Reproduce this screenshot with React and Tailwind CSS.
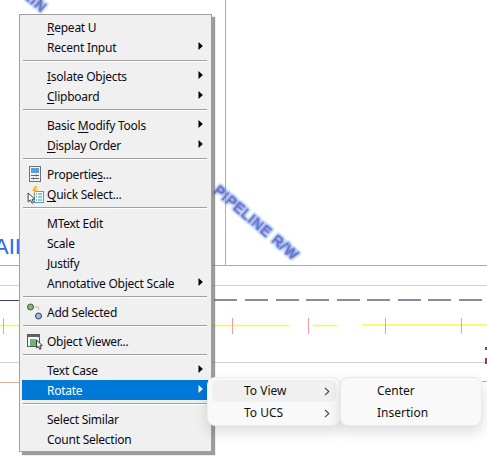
const font = { fontFamily: '"Noto Sans", "Open Sans", sans-serif' };

function Tri({ white }) {
  return (
    <svg width="5" height="8" viewBox="0 0 5 8" className="absolute left-[176px] top-[5px]">
      <path d="M0.5 0L4.8 4L0.5 8Z" fill={white ? '#ffffff' : '#000000'} />
    </svg>
  );
}

function Row({ children, arrow, active, icon }) {
  return (
    <div className={`relative h-5 pl-[25px] flex items-center text-[12px] leading-none tracking-[-0.25px] pt-[2px] ${active ? 'bg-[#0078d7] text-white' : 'text-[#0a0a14]'}`}>
      {icon && <span className="absolute left-[3px] top-0 w-[20px] h-5 flex items-center justify-center">{icon}</span>}
      <span className="whitespace-nowrap">{children}</span>
      {arrow && <Tri white={active} />}
    </div>
  );
}

const Sep = () => (
  <div className="h-[9px] pt-[3px] px-[1px]">
    <div className="h-[1px] bg-[#a0a0a0]" />
    <div className="h-[1px] bg-white" />
  </div>
);

const U = ({ children }) => <span className="underline underline-offset-2">{children}</span>;

const PropsIcon = (
  <svg width="14" height="18" viewBox="0 0 14 18">
    <rect x="1.5" y="1.5" width="11" height="15" fill="#f4f4f4" stroke="#6b7378" />
    <rect x="3" y="3" width="8" height="5" fill="#5a9fdc" />
    <path d="M3 10.5h8M3 13.5h8" stroke="#5d6468" />
    <path d="M8.5 9.5v2M5.5 12.5v2" stroke="#5d6468" />
  </svg>
);

const QuickIcon = (
  <svg width="17" height="19" viewBox="0 0 17 19">
    <rect x="7.5" y="6.5" width="9" height="11" fill="#f5fafd" stroke="#5b9bd0" />
    <path d="M9 9h1M11 9h4M9 12h1M11 12h4M9 15h1M11 15h4" stroke="#3f87c4" />
    <path d="M8 1L5 6h2.5L6 10l5-5.5H8.5L10.5 1Z" fill="#f8b62c" />
    <path d="M1 8l0.2 9 2.2-2 1.6 3.2 1.6-0.8-1.6-3 2.8-0.4Z" fill="#fff" stroke="#3c3c3c" />
  </svg>
);

const AddIcon = (
  <svg width="18" height="18" viewBox="0 0 18 18">
    <circle cx="4.5" cy="4" r="3" fill="#8db17a" stroke="#42573a" />
    <path d="M9 4h3.5v3M10 9" stroke="#c2c2c2" fill="none" />
    <circle cx="12.5" cy="13" r="3" fill="#9db7dd" stroke="#33435d" />
  </svg>
);

const ViewerIcon = (
  <svg width="17" height="17" viewBox="0 0 17 17">
    <rect x="0.5" y="1.5" width="12" height="12" fill="#f4f4f4" stroke="#5a5a5a" />
    <rect x="1" y="2" width="11" height="2" fill="#5f6265" />
    <path d="M3 6h6v7H3Z" fill="#67b874" />
    <path d="M9.5 7l0.2 8 1.8-1.7 1.3 3 1.4-0.7-1.3-2.7 2.4-0.3Z" fill="#fff" stroke="#2e2e2e" />
  </svg>
);

function Chevron() {
  return (
    <svg width="6" height="9" viewBox="0 0 6 9" className="absolute left-[112px] top-[7px]">
      <path d="M1 0.8L4.8 4.5L1 8.2" fill="none" stroke="#404040" strokeWidth="1.1" />
    </svg>
  );
}

function Canvas() {
  const dashes = [214, 245, 276, 306, 337, 367, 398, 428, 459];
  const ticks = [3, 232, 308, 385, 461];
  return (
    <svg width="487" height="463" className="absolute inset-0">
      <defs>
        <filter id="glow" x="-20%" y="-60%" width="140%" height="220%">
          <feMorphology operator="dilate" radius="0.6" />
          <feGaussianBlur stdDeviation="1" />
        </filter>
      </defs>
      <path d="M225.5 0V266" stroke="#dc9c90" />
      <path d="M0 265.5H487" stroke="#d8988c" strokeWidth="1.2" />
      <path d="M0 285.5H487" stroke="#cfcfcf" />
      <path d="M0 300.5H19" stroke="#3a4060" />
      {dashes.map((x) => (
        <path key={x} d={`M${x} 300H${x + 23}`} stroke="#3a4060" strokeWidth="1.2" />
      ))}
      <path d="M0 325.5H20M212 325.5H289M313 325.5H337M362 325H487" stroke="#fbf748" strokeWidth="1.5" />
      {ticks.map((x) => (
        <path key={x} d={`M${x}.5 318V334`} stroke="#f79aa0" />
      ))}
      <path d="M0 362.5H487" stroke="#cfcfcf" />
      <path d="M0 382.5H20" stroke="#d8b0a0" />
      <path d="M482 381.5H487" stroke="#e0a090" />
      <path d="M486 347V350M486 358V364" stroke="#c8283c" strokeWidth="2" />

      <g transform="translate(213 192) rotate(40.5)" fontFamily="Liberation Sans, sans-serif" fontSize="14" letterSpacing="1">
        <text filter="url(#glow)" fill="#5c90f4">PIPELINE R/W</text>
        <text fill="#8a5a90" opacity="0.85">PIPELINE R/W</text>
      </g>
      <g transform="translate(23 -3) rotate(40.5)" fontFamily="Liberation Sans, sans-serif" fontSize="14" letterSpacing="1">
        <text filter="url(#glow)" fill="#5c90f4">LIN</text>
        <text fill="#8a5a90" opacity="0.85">LIN</text>
      </g>
      <text x="-6" y="254" fill="#2a68f2" fontFamily="Liberation Sans, sans-serif" fontSize="22">AII</text>
    </svg>
  );
}

export default function App() {
  return (
    <div className="relative w-[487px] h-[463px] bg-white overflow-hidden" style={font}>
      <Canvas />

      <div className="absolute left-[19px] top-[14px] w-[193px] border border-[#a0a0a0] bg-[#f0f0f0] py-[2px] pl-[2px] pr-[3px] shadow-[3px_3px_1px_rgba(90,90,90,0.6)]">
        <Row><U>R</U>epeat U</Row>
        <Row arrow>Recent Input</Row>
        <Sep />
        <Row arrow><U>I</U>solate Objects</Row>
        <Row arrow><U>C</U>lipboard</Row>
        <Sep />
        <Row arrow>Basic <U>M</U>odify Tools</Row>
        <Row arrow><U>D</U>isplay Order</Row>
        <Sep />
        <Row icon={PropsIcon}>Propertie<U>s</U>...</Row>
        <Row icon={QuickIcon}><U>Q</U>uick Select...</Row>
        <Sep />
        <Row>MText Edit</Row>
        <Row>Scale</Row>
        <Row>Justify</Row>
        <Row arrow>Annotative Object Scale</Row>
        <Sep />
        <Row icon={AddIcon}>Add Selected</Row>
        <Sep />
        <Row icon={ViewerIcon}>Object Viewer...</Row>
        <Sep />
        <Row arrow>Text Case</Row>
        <Row arrow active>Rotate</Row>
        <Sep />
        <Row>Select Similar</Row>
        <Row>Count Selection</Row>
      </div>

      <div className="absolute left-[207px] top-[377px] w-[134px] h-[49px] rounded-[8px] bg-[#f9f9f9] border border-[#ececec] shadow-[0_6px_14px_rgba(0,0,0,0.14)] px-[4px] pt-[2px] text-[12px] text-[#111]">
        <div className="relative h-[22px] rounded-[5px] bg-[#f0f0f0] pl-[32px] flex items-center">
          To View
          <Chevron />
        </div>
        <div className="relative h-[22px] pl-[32px] flex items-center">
          To UCS
          <Chevron />
        </div>
      </div>

      <div className="absolute left-[340px] top-[377px] w-[142px] h-[49px] rounded-[8px] bg-[#f9f9f9] border border-[#e8e8e8] shadow-[0_6px_14px_rgba(0,0,0,0.14)] pt-[2px] pl-[36px] text-[12px] text-[#111]">
        <div className="h-[22px] flex items-center">Center</div>
        <div className="h-[22px] flex items-center">Insertion</div>
      </div>
    </div>
  );
}
